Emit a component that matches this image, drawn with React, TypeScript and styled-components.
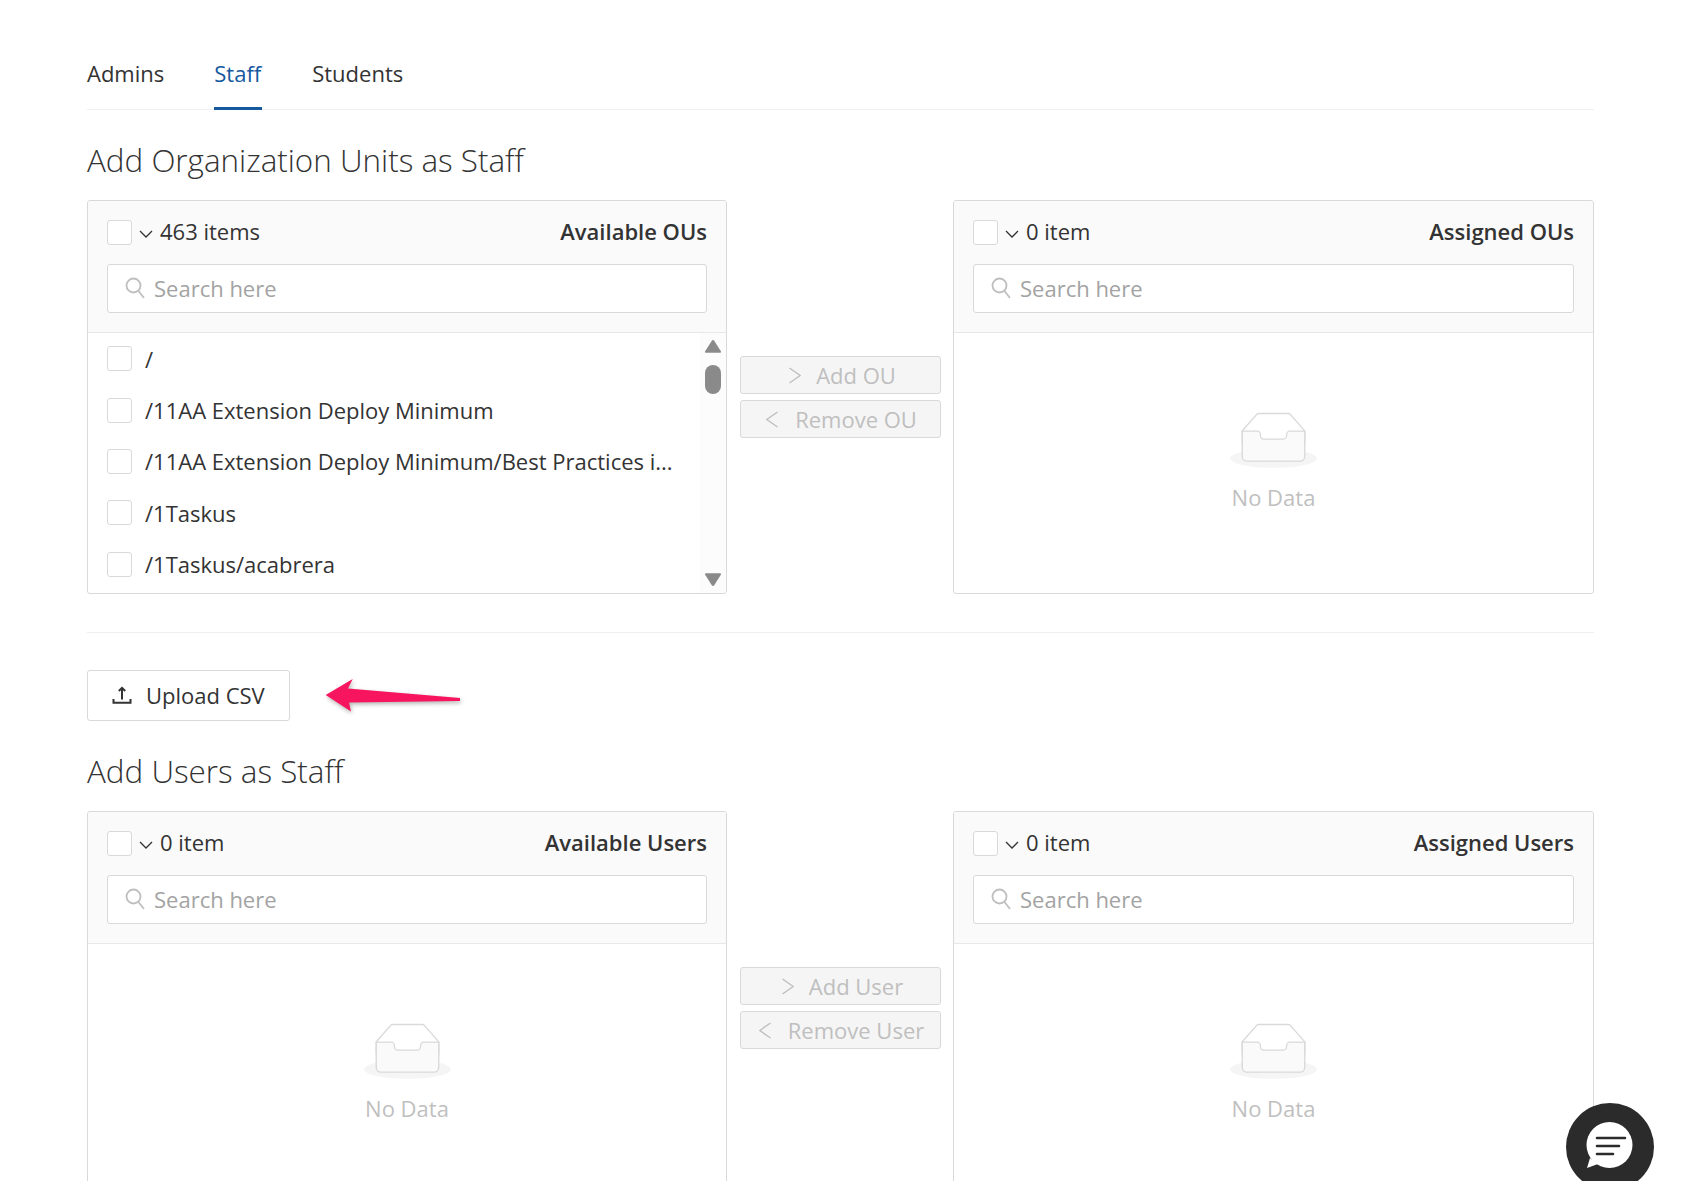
import React from "react";
import styled, { createGlobalStyle } from "styled-components";

const GlobalStyle = createGlobalStyle`
  html, body { margin: 0; padding: 0; height: 1181px; overflow: hidden; background: #fff; }
  body { font-family: "Open Sans", "Liberation Sans", sans-serif; font-size: 22px; color: #333; }
  * { box-sizing: border-box; }
`;

const Page = styled.main`
  width: 1695px;
  height: 1181px;
  padding: 58px 101px 0 87px;
  overflow: hidden;
`;

const Tabs = styled.nav`
  display: flex;
  gap: 50px;
  border-bottom: 1px solid #f0f0f0;
  height: 52px;
`;

const Tab = styled.a<{ $active?: boolean }>`
  position: relative;
  line-height: 30px;
  height: 52px;
  color: ${(p) => (p.$active ? "#15599e" : "#333")};
  ${(p) =>
    p.$active &&
    `padding-right: 1px; &::after { content: ""; position: absolute; left: 0; right: 0; bottom: 0; height: 3px; background: #15599e; }`}
`;

const Heading = styled.h2`
  margin: 29px 0 19px;
  font-size: 31.4px;
  font-weight: 300;
  line-height: 42px;
  color: #333;
`;

const Transfer = styled.section`
  display: grid;
  grid-template-columns: 640px 226px 641px;
  height: 394px;
`;

const Panel = styled.div`
  display: flex;
  flex-direction: column;
  height: 394px;
  border: 1px solid #d9d9d9;
  border-radius: 3px;
  overflow: hidden;
`;

const PanelHeader = styled.header`
  background: #fafafa;
  border-bottom: 1px solid #e8e8e8;
  padding: 19px 19px 18px 19px;
  height: 132px;
`;

const HeaderRow = styled.div`
  display: flex;
  align-items: center;
  height: 25px;
`;

const Checkbox = styled.span`
  display: block;
  flex: none;
  width: 25px;
  height: 25px;
  background: #fff;
  border: 1px solid #d9d9d9;
  border-radius: 3px;
`;

const Caret = styled.svg`
  flex: none;
  margin: 2px 7.5px 0 6.5px;
`;

const HeaderText = styled.span`
  margin-top: -3px;
`;

const Title = styled(HeaderText)`
  margin-left: auto;
  font-weight: 600;
`;

const SearchBox = styled.div`
  display: flex;
  align-items: center;
  gap: 9px;
  height: 49px;
  margin-top: 19px;
  padding: 0 17px 2px;
  background: #fff;
  border: 1px solid #d9d9d9;
  border-radius: 3px;
  color: #a3a3a3;
`;

const PanelBody = styled.div`
  flex: 1;
  min-height: 0;
  display: flex;
`;

const List = styled.ul`
  flex: 1;
  min-width: 0;
  margin: 0;
  padding: 0 0 0 19px;
  list-style: none;
`;

const Row = styled.li`
  display: flex;
  align-items: center;
  gap: 13px;
  height: 51.4px;
  white-space: nowrap;
`;

const ScrollTrack = styled.div`
  flex: none;
  width: 26px;
  padding: 7px 5px 7px 5px;
  background: #fcfcfc;
  display: flex;
  flex-direction: column;
  align-items: center;
`;

const ScrollThumb = styled.div`
  width: 16px;
  height: 29px;
  margin-top: 12px;
  border-radius: 8px;
  background: #8a8a8a;
`;

const ScrollDown = styled.svg`
  margin-top: auto;
`;

const Empty = styled.div`
  flex: 1;
  display: flex;
  flex-direction: column;
  align-items: center;
  padding-top: 79px;
  color: #bfbfbf;
`;

const EmptyText = styled.div`
  margin-top: 14px;
  line-height: 30px;
`;

const Actions = styled.div`
  display: flex;
  flex-direction: column;
  justify-content: center;
  gap: 6px;
  padding: 0 12px 0 13px;
`;

const MoveButton = styled.button<{ $forward?: boolean }>`
  display: flex;
  align-items: center;
  justify-content: center;
  gap: ${(p) => (p.$forward ? 15 : 17)}px;
  height: 38px;
  padding: 0 0 0 ${(p) => (p.$forward ? 4 : 2)}px;
  font: inherit;
  color: #bfbfbf;
  background: #f5f5f5;
  border: 1px solid #d9d9d9;
  border-radius: 3px;
`;

const Divider = styled.hr`
  margin: 38px 0 37px;
  height: 1px;
  border: 0;
  background: #f0f0f0;
`;

const UploadRow = styled.div`
  display: flex;
  align-items: center;
  gap: 30px;
  height: 51px;
`;

const UploadButton = styled.button`
  display: flex;
  align-items: center;
  gap: 14px;
  width: 203px;
  height: 51px;
  padding: 0 0 2px 24px;
  font: inherit;
  color: #333;
  background: #fff;
  border: 1px solid #d9d9d9;
  border-radius: 3px;
`;

const AnnotationArrow = styled.svg`
  flex: none;
  overflow: visible;
  filter: drop-shadow(1px 2px 2px rgba(0, 0, 0, 0.3));
`;

const ChatBubble = styled.button`
  position: fixed;
  left: 1566px;
  top: 1103px;
  width: 88px;
  height: 88px;
  padding: 0;
  border: 0;
  border-radius: 50%;
  background: #2b2b2b;
  display: flex;
  align-items: center;
  justify-content: center;
`;

const CaretDown = () => (
  <Caret width="14" height="8" viewBox="0 0 14 8" fill="none" stroke="#333" strokeWidth="1.3">
    <path d="M1 1l6 6 6-6" />
  </Caret>
);

const SearchIcon = () => (
  <svg width="20" height="22" viewBox="0 0 20 22" fill="none" stroke="#bfbfbf" strokeWidth="1.8">
    <circle cx="8.5" cy="8.5" r="7" />
    <path d="M13.5 14l5.5 7" />
  </svg>
);

const Chevron = ({ left }: { left?: boolean }) => (
  <svg width="12" height="17" viewBox="0 0 12 17" fill="none" stroke="#bfbfbf" strokeWidth="1.5">
    <path d={left ? "M11.500 1L.8 8.500l10.700 7.500" : "M.5 1l10.700 7.500L.5 16"} />
  </svg>
);

const EmptyIcon = () => (
  <svg width="87" height="56" viewBox="0 0 64 41">
    <g transform="translate(0 1)" fill="none" fillRule="evenodd">
      <ellipse fill="#f5f5f5" cx="32" cy="33" rx="32" ry="7" />
      <g fillRule="nonzero" stroke="#d9d9d9">
        <path d="M55 12.76L44.854 1.258C44.367.474 43.656 0 42.907 0H21.093c-.749 0-1.46.474-1.947 1.257L9 12.761V22h46v-9.24z" />
        <path
          d="M41.613 15.931c0-1.605.994-2.93 2.227-2.931H55v18.137C55 33.26 53.68 35 52.05 35h-40.1C10.32 35 9 33.259 9 31.137V13h11.16c1.233 0 2.227 1.323 2.227 2.928v.022c0 1.605 1.005 2.901 2.237 2.901h14.752c1.232 0 2.237-1.308 2.237-2.913v-.007z"
          fill="#fafafa"
        />
      </g>
    </g>
  </svg>
);

const EmptyState = () => (
  <Empty>
    <EmptyIcon />
    <EmptyText>No Data</EmptyText>
  </Empty>
);

const TransferPanel = ({
  count,
  title,
  children,
}: {
  count: string;
  title: string;
  children: React.ReactNode;
}) => (
  <Panel>
    <PanelHeader>
      <HeaderRow>
        <Checkbox />
        <CaretDown />
        <HeaderText>{count}</HeaderText>
        <Title>{title}</Title>
      </HeaderRow>
      <SearchBox>
        <SearchIcon />
        <span>Search here</span>
      </SearchBox>
    </PanelHeader>
    <PanelBody>{children}</PanelBody>
  </Panel>
);

const MoveActions = ({ noun }: { noun: string }) => (
  <Actions>
    <MoveButton $forward>
      <Chevron />
      <span>Add {noun}</span>
    </MoveButton>
    <MoveButton>
      <Chevron left />
      <span>Remove {noun}</span>
    </MoveButton>
  </Actions>
);

const units = [
  "/",
  "/11AA Extension Deploy Minimum",
  "/11AA Extension Deploy Minimum/Best Practices i...",
  "/1Taskus",
  "/1Taskus/acabrera",
];

export default function App() {
  return (
    <Page>
      <GlobalStyle />
      <Tabs>
        <Tab>Admins</Tab>
        <Tab $active>Staff</Tab>
        <Tab>Students</Tab>
      </Tabs>

      <Heading>Add Organization Units as Staff</Heading>
      <Transfer>
        <TransferPanel count="463 items" title="Available OUs">
          <List>
            {units.map((u) => (
              <Row key={u}>
                <Checkbox />
                <span>{u}</span>
              </Row>
            ))}
          </List>
          <ScrollTrack>
            <svg width="16" height="13" viewBox="0 0 16 13" fill="#8a8a8a">
              <path d="M6.800.8a1.400 1.400 0 0 1 2.400 0l6.500 10.200a1 1 0 0 1-.9 1.700H1.200a1 1 0 0 1-.9-1.700z" />
            </svg>
            <ScrollThumb />
            <ScrollDown width="16" height="13" viewBox="0 0 16 13" fill="#8a8a8a">
              <path d="M6.800 12.200a1.400 1.400 0 0 0 2.400 0l6.500-10.200a1 1 0 0 0-.9-1.700H1.200a1 1 0 0 0-.9 1.700z" />
            </ScrollDown>
          </ScrollTrack>
        </TransferPanel>
        <MoveActions noun="OU" />
        <TransferPanel count="0 item" title="Assigned OUs">
          <EmptyState />
        </TransferPanel>
      </Transfer>

      <Divider />

      <UploadRow>
        <UploadButton>
          <svg width="20" height="18" viewBox="0 0 20 18" fill="none" stroke="#333" strokeWidth="2">
            <path d="M10 13.500V2M6.800 5L10 1.800 13.200 5M1.500 13v3.800h17V13" />
          </svg>
          <span>Upload CSV</span>
        </UploadButton>
        <AnnotationArrow width="140" height="40" viewBox="0 0 140 40">
          <path d="M5.700 19L32.700 3 28 12.500l112 9.500v3l-111 1.500 2 9z" fill="#f7155f" />
        </AnnotationArrow>
      </UploadRow>

      <Heading>Add Users as Staff</Heading>
      <Transfer>
        <TransferPanel count="0 item" title="Available Users">
          <EmptyState />
        </TransferPanel>
        <MoveActions noun="User" />
        <TransferPanel count="0 item" title="Assigned Users">
          <EmptyState />
        </TransferPanel>
      </Transfer>

      <ChatBubble aria-label="Chat">
        <svg width="50" height="50" viewBox="0 0 50 50">
          <circle cx="24.500" cy="23" r="23" fill="#fff" />
          <path d="M5 36L2 46l11-4z" fill="#fff" />
          <path d="M12 16h28M12 24h22M12 32h16" stroke="#2b2b2b" strokeWidth="2.600" strokeLinecap="round" />
        </svg>
      </ChatBubble>
    </Page>
  );
}
